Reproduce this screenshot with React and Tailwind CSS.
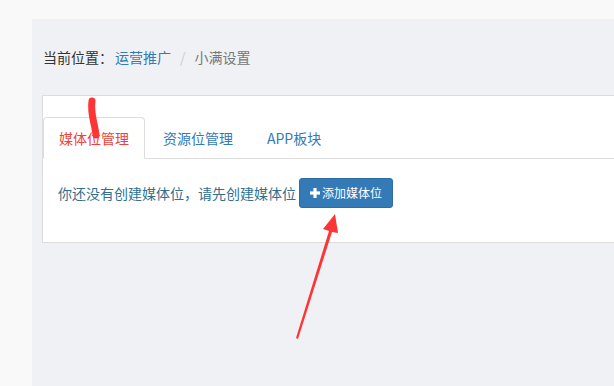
import React from "react";

const cjk = { fontFamily: '"Noto Sans CJK SC", "Liberation Sans", sans-serif' };

export default function App() {
    return (
        <div
            className="relative w-[614px] h-[386px] overflow-hidden bg-[#f9f9f9] pl-[32px] pt-[19px]"
            style={cjk}
        >
            <div className="h-full bg-[#f0f1f5] pl-[10px] pt-[28px] text-[14px] leading-[20px]">
                <div className="flex items-center text-[#333] pl-[1px]">
                    <span>当前位置：</span>
                    <span className="text-[#337ab7] ml-[2px]">运营推广</span>
                    <span className="text-[#ccc] mx-[9px]">/</span>
                    <span className="text-[#777]">小满设置</span>
                </div>

                <div className="mt-[28px] w-[640px] border border-[#dddddd] bg-white pt-[21px]">
                    <div className="flex border-b border-[#dddddd]">
                        <div className="-mb-px rounded-t-[4px] border border-[#dddddd] border-b-white bg-white px-[15px] py-[10px] text-[#f0413a]">
                            媒体位管理
                        </div>
                        <div className="-mb-px ml-[2px] border border-transparent px-[15px] py-[10px] text-[#337ab7]">
                            资源位管理
                        </div>
                        <div className="-mb-px ml-[2px] border border-transparent px-[15px] py-[10px] text-[#337ab7]">
                            APP板块
                        </div>
                    </div>

                    <div className="flex items-center px-[15px] pt-[19px] pb-[34px]">
                        <span className="text-[#31708f]">你还没有创建媒体位，请先创建媒体位</span>
                        <button className="ml-[3px] flex h-[30px] items-center rounded-[3px] border border-[#2e6da4] bg-[#337ab7] px-[10px] text-[12px] text-white">
                            <svg width="10" height="10" viewBox="0 0 10 10" className="mr-[2px]">
                                <rect x="3.4" y="0" width="3.2" height="10" fill="white" />
                                <rect x="0" y="3.4" width="10" height="3.2" fill="white" />
                            </svg>
                            <span>添加媒体位</span>
                        </button>
                    </div>
                </div>
            </div>

            {/* red annotations */}
            <svg className="pointer-events-none absolute left-0 top-0" width="614" height="386">
                <path
                    d="M92 101 C90 114 95 124 96 135"
                    stroke="#ff3535"
                    strokeWidth="7"
                    strokeLinecap="round"
                    fill="none"
                />
                <polygon
                    points="296,338 329,231 323,229 335,214 338,233 332,232 298,339"
                    fill="#ff3535"
                />
            </svg>
        </div>
    );
}
